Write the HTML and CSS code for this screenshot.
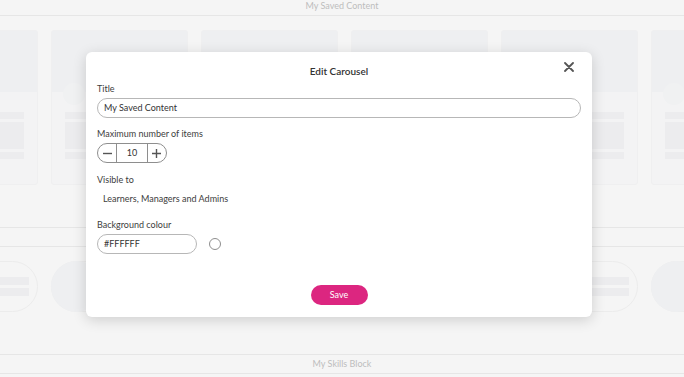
FILE: index.html
```html
<!DOCTYPE html>
<html lang="en">
<head>
<meta charset="UTF-8">
<meta name="viewport" content="width=device-width, initial-scale=1.0">
<title>Edit Carousel</title>
<link rel="stylesheet" href="styles.css">
</head>
<body>
<div class="page">
    <div class="section-head first">My Saved Content</div>
    <div class="carousel">
        <div class="card"><div class="card-img"></div><div class="card-body"><div class="bar thin"></div><div class="bar thick"></div><div class="bar thin"></div></div></div>
        <div class="card"><div class="card-img"></div><div class="avatar"></div><div class="card-body"><div class="bar thin"></div><div class="bar thick"></div><div class="bar thin"></div></div></div>
        <div class="card"><div class="card-img"></div><div class="avatar"></div><div class="card-body"><div class="bar thin"></div><div class="bar thick"></div><div class="bar thin"></div></div></div>
        <div class="card"><div class="card-img"></div><div class="avatar"></div><div class="card-body"><div class="bar thin"></div><div class="bar thick"></div><div class="bar thin"></div></div></div>
        <div class="card"><div class="card-img"></div><div class="avatar"></div><div class="card-body"><div class="bar thin"></div><div class="bar thick"></div><div class="bar thin"></div></div></div>
        <div class="card"><div class="card-img"></div><div class="avatar"></div><div class="card-body"><div class="bar thin"></div><div class="bar thick"></div><div class="bar thin"></div></div></div>
    </div>
    <div class="section-head">My Skills</div>
    <div class="skills">
        <div class="skill"><div class="skill-dot"></div><div class="skill-bars"><div class="bar"></div><div class="bar"></div></div></div>
        <div class="skill"><div class="skill-dot"></div><div class="skill-bars"><div class="bar"></div><div class="bar"></div></div></div>
        <div class="skill"><div class="skill-dot"></div><div class="skill-bars"><div class="bar"></div><div class="bar"></div></div></div>
        <div class="skill"><div class="skill-dot"></div><div class="skill-bars"><div class="bar"></div><div class="bar"></div></div></div>
        <div class="skill"><div class="skill-dot"></div><div class="skill-bars"><div class="bar"></div><div class="bar"></div></div></div>
        <div class="skill"><div class="skill-dot"></div><div class="skill-bars"><div class="bar"></div><div class="bar"></div></div></div>
    </div>
    <div class="section-head">My Skills Block</div>
</div>

<div class="modal">
    <div class="modal-head">
        <h2>Edit Carousel</h2>
        <button class="close" type="button"><svg width="10" height="10" viewBox="0 0 10 10"><path d="M1 1 L9 9 M9 1 L1 9" stroke="#555" stroke-width="1.8" stroke-linecap="round"/></svg></button>
    </div>

    <label class="label">Title</label>
    <div class="text-input wide">My Saved Content</div>

    <label class="label">Maximum number of items</label>
    <div class="stepper">
        <span class="step">
            <svg width="9" height="9" viewBox="0 0 9 9"><path d="M0 4.5 H9" stroke="#555" stroke-width="1.4"/></svg>
        </span>
        <span class="step-value">10</span>
        <span class="step">
            <svg width="9" height="9" viewBox="0 0 9 9"><path d="M0 4.5 H9 M4.5 0 V9" stroke="#555" stroke-width="1.4"/></svg>
        </span>
    </div>

    <label class="label">Visible to</label>
    <div class="plain">Learners, Managers and Admins</div>

    <label class="label colour-label">Background colour</label>
    <div class="colour-row">
        <div class="text-input short">#FFFFFF</div>
        <span class="swatch"></span>
    </div>

    <div class="actions">
        <button class="save" type="button">Save</button>
    </div>
</div>
</body>
</html>
```

FILE: styles.css
```css
body {
    font-family: Lato, "Noto Sans", sans-serif;
    margin: 0;
    padding: 0;
    width: 684px;
    height: 377px;
    overflow: hidden;
    background-color: #f5f5f5;
    position: relative;
}

.page {
    width: 684px;
    overflow: hidden;
}

.section-head {
    height: 18px;
    line-height: 18px;
    text-align: center;
    font-size: 9px;
    color: #bdbdbd;
    border-top: 1px solid #e6e6e6;
    border-bottom: 1px solid #e6e6e6;
}

.section-head.first {
    height: 15px;
    line-height: 12px;
    border-top: none;
}

.carousel {
    display: flex;
    gap: 13px;
    margin-left: -99px;
    padding-top: 14px;
    height: 155px;
    margin-bottom: 42px;
}

.card {
    flex: 0 0 137px;
    height: 155px;
    background-color: #f3f3f4;
    border: 1px solid #efeff0;
    border-radius: 3px;
    box-sizing: border-box;
    position: relative;
}

.card-img {
    height: 61px;
    background-color: #eeeff1;
}

.avatar {
    position: absolute;
    left: 11px;
    top: 52px;
    width: 22px;
    height: 22px;
    border-radius: 50%;
    background-color: #f0f1f2;
}

.card-body {
    padding: 20px 13px 0 13px;
    display: flex;
    flex-direction: column;
    gap: 3px;
}

.bar {
    background-color: #ececee;
}

.bar.thin {
    height: 7px;
}

.bar.thick {
    height: 27px;
}

.skills {
    display: flex;
    gap: 13px;
    margin-left: -99px;
    padding-top: 14px;
    height: 51px;
    margin-bottom: 42px;
}

.skill {
    flex: 0 0 137px;
    height: 51px;
    border: 1px solid #ececec;
    border-radius: 26px;
    box-sizing: border-box;
    display: flex;
    align-items: center;
}

.skill-dot {
    width: 51px;
    height: 51px;
    margin-left: -1px;
    border-radius: 50%;
    background-color: #eeeff1;
}

.skill-bars {
    flex: 1;
    margin: 0 8px 0 12px;
    display: flex;
    flex-direction: column;
    gap: 3px;
}

.skill-bars .bar {
    height: 8px;
}

.modal {
    position: absolute;
    left: 86px;
    top: 52px;
    width: 506px;
    height: 265px;
    box-sizing: border-box;
    padding: 1px 11px 0 11px;
    background-color: #fff;
    border-radius: 6px;
    box-shadow: 0 3px 14px rgba(0, 0, 0, 0.16);
    color: #3a3a3a;
}

.modal-head {
    height: 29px;
    padding-top: 10px;
    box-sizing: border-box;
    position: relative;
}

.modal-head h2 {
    margin: 0;
    font-size: 10px;
    line-height: 16px;
    font-weight: 600;
    text-align: center;
    color: #333;
}

.close {
    position: absolute;
    right: 7px;
    top: 9px;
    width: 10px;
    height: 10px;
    padding: 0;
    border: none;
    background: none;
    line-height: 0;
}

.label {
    display: block;
    font-size: 9px;
    line-height: 14px;
    color: #3d3d3d;
    margin-bottom: 2px;
}

.text-input {
    height: 20px;
    box-sizing: border-box;
    border: 1px solid #b7b7b7;
    border-radius: 10px;
    padding: 0 6px;
    font-size: 9px;
    line-height: 18px;
    color: #333;
}

.text-input.wide {
    width: 484px;
    margin-bottom: 9px;
}

.stepper {
    display: flex;
    width: 70px;
    height: 20px;
    box-sizing: border-box;
    border: 1px solid #8e8e8e;
    border-radius: 10px;
    margin-bottom: 10px;
}

.step {
    width: 19px;
    display: flex;
    align-items: center;
    justify-content: center;
}

.step-value {
    width: 30px;
    border-left: 1px solid #8e8e8e;
    border-right: 1px solid #8e8e8e;
    text-align: center;
    font-size: 9px;
    line-height: 18px;
    color: #333;
}

.plain {
    padding-left: 6px;
    font-size: 9px;
    line-height: 14px;
    color: #3d3d3d;
    margin-top: 5px;
}

.colour-label {
    margin-top: 12px;
}

.colour-row {
    display: flex;
    align-items: center;
    gap: 12px;
}

.text-input.short {
    width: 100px;
}

.swatch {
    width: 12px;
    height: 12px;
    box-sizing: border-box;
    border: 1px solid #8e8e8e;
    border-radius: 50%;
}

.actions {
    margin-top: 28px;
    text-align: center;
}

.save {
    width: 57px;
    height: 20px;
    border: none;
    border-radius: 10px;
    background-color: #dc2680;
    color: #fff;
    font-family: Lato, "Noto Sans", sans-serif;
    font-size: 9px;
    padding: 0;
}
```
